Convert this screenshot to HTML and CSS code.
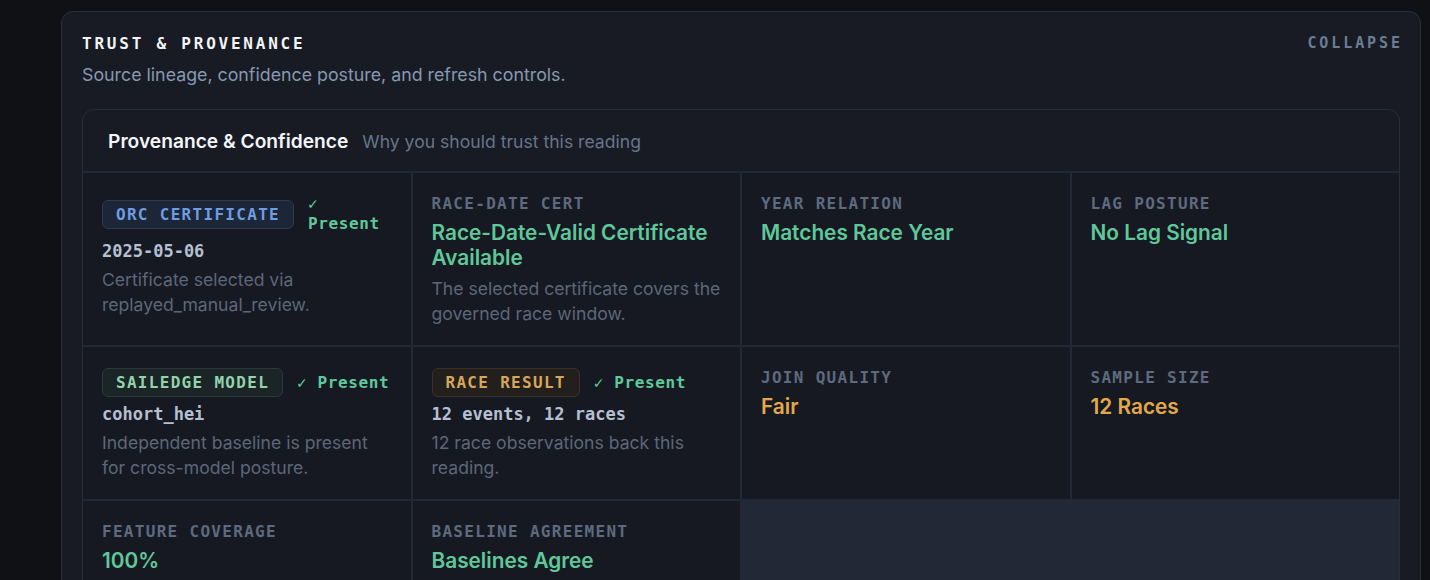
FILE: index.html
```html
<!DOCTYPE html>
<html lang="en">
<head>
<meta charset="utf-8">
<title>Trust &amp; Provenance</title>
<link rel="stylesheet" href="styles.css">
</head>
<body>
<div class="page">
  <section class="panel">
    <div class="panel-head">
      <h2 class="panel-title">TRUST &amp; PROVENANCE</h2>
      <button class="collapse" type="button">COLLAPSE</button>
    </div>
    <p class="panel-sub">Source lineage, confidence posture, and refresh controls.</p>

    <div class="card">
      <div class="card-head">
        <span class="card-title">Provenance &amp; Confidence</span>
        <span class="card-hint">Why you should trust this reading</span>
      </div>
      <div class="grid">
        <div class="cell">
          <div class="src-row">
            <span class="badge badge-blue">ORC CERTIFICATE</span>
            <span class="present">✓ Present</span>
          </div>
          <div class="src-val">2025-05-06</div>
          <p class="desc desc-src">Certificate selected via replayed_manual_review.</p>
        </div>
        <div class="cell">
          <div class="label">RACE-DATE CERT</div>
          <div class="value good">Race-Date-Valid Certificate Available</div>
          <p class="desc">The selected certificate covers the governed race window.</p>
        </div>
        <div class="cell">
          <div class="label">YEAR RELATION</div>
          <div class="value good">Matches Race Year</div>
        </div>
        <div class="cell">
          <div class="label">LAG POSTURE</div>
          <div class="value good">No Lag Signal</div>
        </div>

        <div class="cell">
          <div class="src-row">
            <span class="badge badge-green">SAILEDGE MODEL</span>
            <span class="present">✓ Present</span>
          </div>
          <div class="src-val">cohort_hei</div>
          <p class="desc desc-src">Independent baseline is present for cross-model posture.</p>
        </div>
        <div class="cell">
          <div class="src-row">
            <span class="badge badge-amber">RACE RESULT</span>
            <span class="present">✓ Present</span>
          </div>
          <div class="src-val">12 events, 12 races</div>
          <p class="desc desc-src">12 race observations back this reading.</p>
        </div>
        <div class="cell">
          <div class="label">JOIN QUALITY</div>
          <div class="value warn">Fair</div>
        </div>
        <div class="cell">
          <div class="label">SAMPLE SIZE</div>
          <div class="value warn">12 Races</div>
        </div>

        <div class="cell">
          <div class="label">FEATURE COVERAGE</div>
          <div class="value good">100%</div>
        </div>
        <div class="cell">
          <div class="label">BASELINE AGREEMENT</div>
          <div class="value good">Baselines Agree</div>
        </div>
      </div>
    </div>
  </section>
</div>
</body>
</html>
```

FILE: styles.css
```css
html, body {
  margin: 0;
  height: 100%;
  overflow: hidden;
  background: #0f1115;
}

.page {
  padding: 11px 9px 0 61px;
}

.panel {
  background: #181b23;
  border: 1px solid #2a2f3b;
  border-radius: 12px;
  padding: 21px 20px 40px;
}

.panel-head {
  display: flex;
  justify-content: space-between;
  align-items: flex-start;
}

.panel-title {
  margin: 0;
  font: 700 16px/22px "DejaVu Sans Mono", monospace;
  letter-spacing: 2.78px;
  color: #f1f3f6;
}

.collapse {
  background: none;
  border: 0;
  padding: 0;
  margin: 0 -2.9px 0 0;
  font: 700 15px/20px "DejaVu Sans Mono", monospace;
  letter-spacing: 2.9px;
  color: #6b7c95;
  cursor: pointer;
}

.panel-sub {
  margin: 8px 0 0;
  font: 400 17.8px/24px Inter, "Noto Sans", sans-serif;
  color: #8798b2;
}

.card {
  margin-top: 22px;
  border: 1px solid #272d3a;
  border-radius: 12px;
  overflow: hidden;
}

.card-head {
  display: flex;
  align-items: baseline;
  gap: 14px;
  padding: 19px 25px 17px;
  border-bottom: 2px solid #222836;
}

.card-title {
  font: 600 19.2px/25px Inter, "Noto Sans", sans-serif;
  color: #f3f5f8;
}

.card-hint {
  font: 400 17.6px/25px Inter, "Noto Sans", sans-serif;
  color: #66758c;
}

.grid {
  display: grid;
  grid-template-columns: repeat(4, 1fr);
  gap: 2px;
  background: #222836;
}

.cell {
  background: #161921;
  padding: 21px 19px 19px;
  min-width: 0;
}

.label {
  font: 700 16px/20px "DejaVu Sans Mono", monospace;
  letter-spacing: 1.3px;
  color: #5d6a7f;
}

.value {
  margin-top: 6px;
  font: 600 20.8px/25px Inter, "Noto Sans", sans-serif;
}

.good { color: #5fc89a; }
.warn { color: #e2a94b; }

.desc {
  margin: 6px 0 0;
  font: 400 17.6px/25px Inter, "Noto Sans", sans-serif;
  color: #5c677a;
}

.desc-src {
  margin-top: 5px;
}

.src-row {
  display: flex;
  align-items: center;
  gap: 14px;
}

.badge {
  flex: none;
  white-space: nowrap;
  padding: 4px 13px;
  border: 1px solid;
  border-radius: 6px;
  font: 700 16px/19px "DejaVu Sans Mono", monospace;
  letter-spacing: 1.3px;
}

.badge-blue {
  color: #6d9de3;
  background: #1d2636;
  border-color: #2c3b54;
}

.badge-green {
  color: #93d3ab;
  background: #1b2427;
  border-color: #2b3a37;
}

.badge-amber {
  color: #d8a65a;
  background: #221f1c;
  border-color: #3a3226;
}

.present {
  font: 700 16px/20px "DejaVu Sans Mono", monospace;
  letter-spacing: 0.6px;
  color: #5ec99a;
}

.src-val {
  margin-top: 6px;
  font: 700 17px/22px "DejaVu Sans Mono", monospace;
  color: #b5bfd2;
}
```
